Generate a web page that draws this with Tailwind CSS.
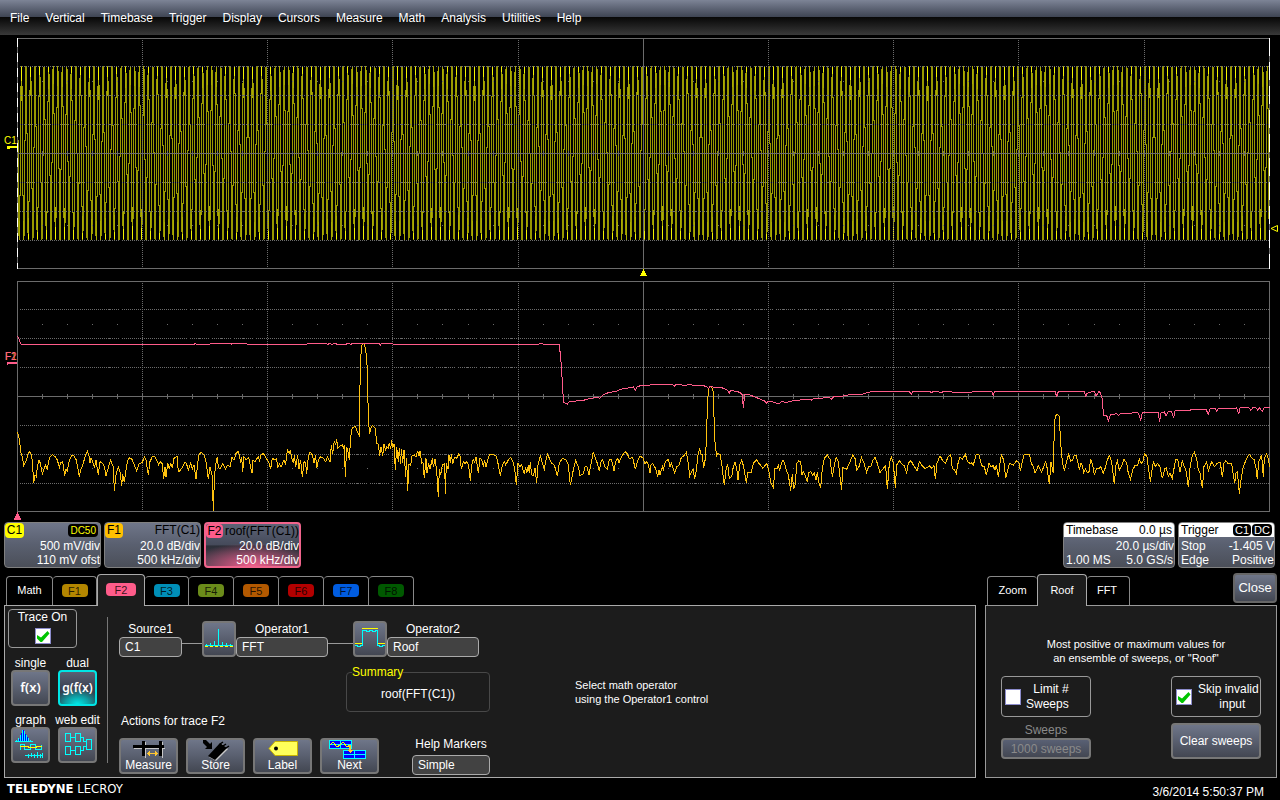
<!DOCTYPE html>
<html lang="en">
  <head>
    <meta charset="utf-8" />
    <meta content="width=device-width, initial-scale=1" name="viewport" />
    <title>Oscilloscope</title>
    <script src="https://cdn.jsdelivr.net/npm/@tailwindcss/browser@4"></script>
  </head>
  <body class="bg-black text-white min-h-screen flex flex-col text-xs font-['Liberation_Sans',Arial,sans-serif]">

    <!-- Menu bar -->
    <header class="h-[35px] bg-linear-to-b from-[#7d8496] from-0% via-[#3f4554] via-48% to-[#383838] relative">
      <div class="absolute inset-x-0 bottom-0 h-[18px] bg-linear-to-b from-[#080808] to-[#3a3a3a]"></div>
      <nav class="relative flex items-center gap-4 h-full px-[10px]">
        <button type="button">File</button>
        <button type="button">Vertical</button>
        <button type="button">Timebase</button>
        <button type="button">Trigger</button>
        <button type="button">Display</button>
        <button type="button">Cursors</button>
        <button type="button">Measure</button>
        <button type="button">Math</button>
        <button type="button">Analysis</button>
        <button type="button">Utilities</button>
        <button type="button">Help</button>
      </nav>
    </header>

    <!-- Time domain grid -->
    <section class="relative" aria-label="C1 waveform">
      <svg class="block w-full h-[241px]" viewBox="0 35 1280 241" preserveAspectRatio="none" shape-rendering="crispEdges" fill="none">
        <g id="sine"></g>
        <g id="gridTop" stroke="#6b6b6b"></g>
        <path d="M17.5 38V269" stroke="#fff" stroke-dasharray="9 6" />
        <path d="M1269.5 38V269" stroke="#fff" stroke-dasharray="18 6" />
        <path d="M7 146h10v2H10v1H7z" fill="#ff0" />
        <path d="M643 269h1v2h1v2h1v2h1v2h-7v-2h1v-2h1v-2h1z" fill="#ff0" />
        <path d="M1271 228.500l6.500-3v6z" stroke="#ff0" shape-rendering="auto" />
      </svg>
      <span class="absolute left-1 top-[100px] text-[10px] leading-3 text-[#ff0]">C1</span>
    </section>

    <!-- Spectrum grid -->
    <section class="relative" aria-label="F1 and F2 spectrum">
      <svg class="block w-full h-[245px]" viewBox="0 276 1280 245" preserveAspectRatio="none" shape-rendering="crispEdges" fill="none">
        <g id="gridBottom" stroke="#6b6b6b"></g>
        <g id="fft" stroke="#ffc20e"></g>
        <g id="roof" stroke="#ff5c8a"></g>
        <path d="M7 362h10v2H8v1H7z" fill="#ff5c8a" />
        <path d="M17 512h1v2h1v2h1v2h1v2h-7v-2h1v-2h1v-2h1z" fill="#ff5c8a" />
      </svg>
      <span class="absolute left-[5px] top-[75px] text-[10px] leading-3 text-[#ffb020]">F1</span>
      <span class="absolute left-[5px] top-[75px] text-[10px] leading-3 text-[#ff5c8a]">F2</span>
    </section>

    <!-- Descriptor boxes -->
    <section class="flex gap-[3px] px-1 pt-[1px] pr-[5px]">
      <div class="w-[97px] h-[46px] border border-[#808080] rounded bg-linear-to-b from-[#6f7689] from-0% via-[#5a6070] via-48% to-[#4b4f59] overflow-hidden text-right">
        <div class="flex justify-between h-[15px] leading-[15px]">
          <span class="bg-[#ff0] text-black rounded-sm w-[19px] text-center">C1</span>
          <span class="bg-black text-[#ff0] rounded-sm text-[10px] px-[2px] my-[1px] leading-[13px] mr-[2px]">DC50</span>
        </div>
        <div class="h-[15px] leading-[17px]">500 mV/div</div>
        <div class="h-[14px] leading-[15px]">110 mV ofst</div>
      </div>
      <div class="w-[97px] h-[46px] border border-[#808080] rounded bg-linear-to-b from-[#6f7689] from-0% via-[#5a6070] via-48% to-[#4b4f59] overflow-hidden text-right">
        <div class="flex justify-between h-[15px] leading-[15px] text-black">
          <span class="bg-[#ffc000] rounded-sm w-[18px] text-center">F1</span>
          <span>FFT(C1)</span>
        </div>
        <div class="h-[15px] leading-[17px]">20.0 dB/div</div>
        <div class="h-[14px] leading-[15px]">500 kHz/div</div>
      </div>
      <div class="w-[97px] h-[46px] border-2 border-[#f0648c] rounded bg-[radial-gradient(70%_55%_at_50%_100%,#f0608c_0%,#a04c6c_45%,transparent_100%),linear-gradient(#5c6376,#454a5a_50%,#2c2f38_52%,#3c3f49)] overflow-hidden text-right">
        <div class="flex justify-between h-[14px] leading-[15px] text-black">
          <span class="bg-[#ff5c8a] rounded-sm w-[17px] text-center">F2</span>
          <span>roof(FFT(C1))</span>
        </div>
        <div class="h-[15px] leading-[17px]">20.0 dB/div</div>
        <div class="h-[14px] leading-[15px]">500 kHz/div</div>
      </div>
      <div class="flex-1"></div>
      <div class="w-[112px] h-[46px] border border-[#808080] rounded bg-linear-to-b from-[#6f7689] from-0% via-[#5a6070] via-48% to-[#4b4f59] overflow-hidden">
        <div class="flex justify-between h-[14px] leading-[15px] bg-white text-black px-[2px]">
          <span>Timebase</span><span>0.0 µs</span>
        </div>
        <div class="h-[16px] leading-[19px] text-right">20.0 µs/div</div>
        <div class="flex justify-between h-[14px] leading-[15px] pl-[2px] pr-[1px]"><span>1.00 MS</span><span>5.0 GS/s</span></div>
      </div>
      <div class="w-[97px] h-[46px] border border-[#808080] rounded bg-linear-to-b from-[#6f7689] from-0% via-[#5a6070] via-48% to-[#4b4f59] overflow-hidden">
        <div class="flex gap-[1px] h-[14px] leading-[15px] bg-white text-black px-[2px]">
          <span class="flex-1">Trigger</span>
          <span class="bg-black text-white rounded-sm text-[11px] leading-3 my-[1px] px-[2px]">C1</span>
          <span class="bg-black text-white rounded-sm text-[11px] leading-3 my-[1px] px-[2px]">DC</span>
        </div>
        <div class="flex justify-between h-[16px] leading-[19px] pl-[2px]"><span>Stop</span><span>-1.405 V</span></div>
        <div class="flex justify-between h-[14px] leading-[15px] pl-[2px]"><span>Edge</span><span>Positive</span></div>
      </div>
    </section>

    <main class="flex gap-[9px] px-1 pt-[5px] pr-[3px]">
      <!-- Math dialog -->
      <div class="flex-1">
        <div class="flex items-end h-8 pl-[2px] text-[11px]" role="tablist">
          <button type="button" role="tab" class="w-[47px] h-[29px] border border-b-0 border-[#888] rounded-t pb-[2px]">Math</button>
          <button type="button" role="tab" class="w-11 h-[29px] border border-b-0 border-l-0 border-[#888] rounded-t pb-[2px] flex items-center justify-center"><span class="bg-[#b38600] text-black/80 rounded-sm w-[26px] h-[13px] leading-[14px]">F1</span></button>
          <button type="button" role="tab" aria-selected="true" class="relative w-12 h-8 -mb-px border border-b-0 border-[#aaa] bg-[#1c1c1c] rounded-t pb-[2px] flex items-center justify-center"><span class="bg-[#ff5c8a] text-black/80 rounded-sm w-[30px] h-[13px] leading-[14px]">F2</span></button>
          <button type="button" role="tab" class="w-11 h-[29px] border border-b-0 border-l-0 border-[#888] rounded-t pb-[2px] flex items-center justify-center"><span class="bg-[#008fb8] text-black/80 rounded-sm w-[26px] h-[13px] leading-[14px]">F3</span></button>
          <button type="button" role="tab" class="w-[45px] h-[29px] border border-b-0 border-l-0 border-[#888] rounded-t pb-[2px] flex items-center justify-center"><span class="bg-[#6b8c1a] text-black/80 rounded-sm w-[26px] h-[13px] leading-[14px]">F4</span></button>
          <button type="button" role="tab" class="w-[45px] h-[29px] border border-b-0 border-l-0 border-[#888] rounded-t pb-[2px] flex items-center justify-center"><span class="bg-[#b35900] text-black/80 rounded-sm w-[26px] h-[13px] leading-[14px]">F5</span></button>
          <button type="button" role="tab" class="w-[45px] h-[29px] border border-b-0 border-l-0 border-[#888] rounded-t pb-[2px] flex items-center justify-center"><span class="bg-[#b30000] text-black/80 rounded-sm w-[26px] h-[13px] leading-[14px]">F6</span></button>
          <button type="button" role="tab" class="w-[45px] h-[29px] border border-b-0 border-l-0 border-[#888] rounded-t pb-[2px] flex items-center justify-center"><span class="bg-[#005ce0] text-black/80 rounded-sm w-[26px] h-[13px] leading-[14px]">F7</span></button>
          <button type="button" role="tab" class="w-[45px] h-[29px] border border-b-0 border-l-0 border-[#888] rounded-t pb-[2px] flex items-center justify-center"><span class="bg-[#005900] text-black/80 rounded-sm w-[26px] h-[13px] leading-[14px]">F8</span></button>
        </div>

        <div class="flex h-[173px] border border-[#aaa] bg-[#1c1c1c] pl-[3px]">
          <!-- Trace and mode -->
          <div class="w-[99px] pt-[3px]">
            <label class="w-[69px] h-[39px] border border-[#999] rounded flex flex-col items-center">
              <span class="leading-[14px] mb-1">Trace On</span>
              <span class="relative w-4 h-4">
                <input type="checkbox" checked class="peer appearance-none block w-4 h-4 bg-white border border-[#8c8ccc]" />
                <svg class="absolute inset-0 w-4 h-4 hidden peer-checked:block pointer-events-none" viewBox="0 0 16 16" fill="#00c400"><path d="M2 7l4 2.500 6.500-6.500 2 2.500-7.500 8.500h-1.500L2 10.500z" /></svg>
              </span>
            </label>
            <div class="grid grid-cols-[39px_39px] gap-x-2 pl-[3px] mt-2 text-center">
              <span class="leading-[14px]">single</span>
              <span class="leading-[14px]">dual</span>
              <button type="button" class="h-9 mb-[7px] rounded border-2 border-[#777] bg-linear-to-b from-[#6f7689] from-0% via-[#5a6070] via-48% to-[#434752] text-[13px] font-['Noto_Sans'] font-semibold">f(x)</button>
              <button type="button" class="h-9 mb-[7px] rounded border-2 border-[#00e5e5] bg-[radial-gradient(70%_50%_at_50%_100%,#00e8e8_0%,#109aa0_50%,transparent_100%),linear-gradient(#596074,#3c4252_50%,#2c3240)] text-xs font-['Noto_Sans'] font-semibold whitespace-nowrap flex items-center justify-center">g(f(x)</button>
              <span class="leading-[14px]">graph</span>
              <span class="leading-[14px] whitespace-nowrap -mx-1">web edit</span>
              <button type="button" aria-label="Graph" class="h-9 rounded border-2 border-[#777] bg-linear-to-b from-[#6f7689] from-0% via-[#5a6070] via-48% to-[#434752] flex items-center justify-center">
                <svg class="w-[34px] h-8" viewBox="0 0 34 32" fill="none" shape-rendering="crispEdges">
                  <path d="M5.500 12V10M7.500 12V4M9.500 12V1M11.500 12V5M13.500 12V8" stroke="#00f" />
                  <path d="M2.500 12V11M4.500 12V9M6.500 12V6M8.500 12V1M10.500 12V2M12.500 12V6M14.500 12V9M16.500 12V11M1 12.500h18" stroke="#0ff" />
                  <path d="M6.500 21V15.500h4V20.500h6V15.500h5V20.500h6V15.500" stroke="#0ff" />
                  <path d="M6 17.500h8v1h8v-1h6" stroke="#ff0" />
                  <path d="M11 26.500h18M14.500 25v4M17.500 24v4M20.500 25v4M23.500 23v6M26.500 25v4M28.500 24v5" stroke="#0ff" />
                </svg>
              </button>
              <button type="button" aria-label="Web edit" class="h-9 rounded border-2 border-[#777] bg-linear-to-b from-[#6f7689] from-0% via-[#5a6070] via-48% to-[#434752] flex items-center justify-center">
                <svg class="w-[34px] h-8" viewBox="0 0 34 32" fill="none" stroke="#0ff" shape-rendering="crispEdges">
                  <path d="M4.500 4.500h5v8h-5zM14.500 4.500h5v8h-5zM4.500 17.500h5v8h-5zM14.500 17.500h5v8h-5zM25.500 10.500h5v10h-5zM10 8.500h4M10 21.500h4M20 8.500h2.500v4H25M20 21.500h2.500v-4H25" />
                </svg>
              </button>
            </div>
          </div>
          <div class="w-px bg-[#777] mt-[11px] mb-[14px]"></div>

          <!-- Operators and actions -->
          <div class="flex-1 pl-[11px] pt-[15px]">
            <div class="flex items-end">
              <div class="w-[63px] flex flex-col">
                <label for="source1" class="text-center leading-[14px] mb-[1px]">Source1</label>
                <select id="source1" class="appearance-none w-full h-5 bg-[#424242] border border-[#aaa] rounded pl-[5px]"><option>C1</option></select>
              </div>
              <div class="w-5 h-px bg-[#999] mb-[13px]"></div>
              <button type="button" aria-label="Operator 1 picture" class="w-[34px] h-9 rounded border-2 border-[#777] bg-linear-to-b from-[#6f7689] from-0% via-[#5a6070] via-48% to-[#434752]">
                <svg class="w-[30px] h-8" viewBox="0 0 30 32" fill="none" shape-rendering="crispEdges">
                  <path d="M1 23.500h28" stroke="#ff0" stroke-dasharray="3 2" />
                  <path d="M1 22.500h28M14.500 6v17M2.500 21v2M6.500 20v3M10.500 18v5M18.500 19v4M22.500 20v3M26.500 21v2" stroke="#0ff" />
                </svg>
              </button>
              <div class="w-[92px] flex flex-col">
                <label for="operator1" class="text-center leading-[14px] mb-[1px]">Operator1</label>
                <select id="operator1" class="appearance-none w-full h-5 bg-[#424242] border border-[#aaa] rounded pl-[5px]"><option>FFT</option></select>
              </div>
              <div class="w-[25px] h-px bg-[#999] mb-[13px]"></div>
              <button type="button" aria-label="Operator 2 picture" class="w-[34px] h-9 rounded border-2 border-[#777] bg-linear-to-b from-[#6f7689] from-0% via-[#5a6070] via-48% to-[#434752]">
                <svg class="w-[30px] h-8" viewBox="0 0 30 32" fill="none" shape-rendering="crispEdges">
                  <path d="M0 20.500h7M7 5.500h16M23 20.500h7" stroke="#ff0" />
                  <path d="M0 22.500h2v1h3v-1h2.500V6.500M8 7.500h3v1h3v-1h3v1h3v-1h2.500V22.500h2v1h3v-1h3" stroke="#0ff" />
                </svg>
              </button>
              <div class="w-[92px] flex flex-col">
                <label for="operator2" class="text-center leading-[14px] mb-[1px]">Operator2</label>
                <select id="operator2" class="appearance-none w-full h-5 bg-[#424242] border border-[#aaa] rounded pl-[5px]"><option>Roof</option></select>
              </div>
            </div>

            <div class="flex items-end mt-2 ml-[227px] gap-[85px]">
              <fieldset class="w-[144px] h-[47px] border border-[#484848] rounded">
                <legend class="ml-[5px] leading-[14px] text-[#ff0]">Summary</legend>
                <p class="leading-[14px] mt-2 text-center">roof(FFT(C1))</p>
              </fieldset>
              <p class="text-[11px] leading-[14px] mb-[6px]">Select math operator<br />using the Operator1 control</p>
            </div>

            <div class="flex items-end mt-[2px]">
              <div>
                <p class="leading-[14px] pl-[2px] mb-[10px]">Actions for trace F2</p>
                <div class="flex gap-2">
                  <button type="button" class="w-[59px] h-9 rounded border-2 border-[#777] bg-linear-to-b from-[#6f7689] from-0% via-[#5a6070] via-48% to-[#434752] flex flex-col items-center">
                    <svg class="w-8 h-[18px] shrink-0" viewBox="0 0 32 18" fill="none" shape-rendering="crispEdges">
                      <path d="M1 8.500h31M12.500 2v16M29.500 2v16" stroke="#c8c8c8" />
                      <path d="M0 6.500h31M10.500 1v15M27.500 1v15" stroke="#000" stroke-width="3" />
                      <path d="M14 13.500h11M16.500 11v5M15.500 12v3M22.500 11v5M23.500 12v3" stroke="#ffc832" />
                    </svg>
                    <span class="leading-[14px]">Measure</span>
                  </button>
                  <button type="button" class="w-[59px] h-9 rounded border-2 border-[#777] bg-linear-to-b from-[#6f7689] from-0% via-[#5a6070] via-48% to-[#434752] flex flex-col items-center">
                    <svg class="w-8 h-[18px] shrink-0 overflow-visible" viewBox="0 0 32 18" fill="none">
                      <path d="M9 17L22 4l6 5-12 12z" fill="#c8c8c8" />
                      <path d="M8 16L20 3l7 5-12 12z" fill="#000" />
                      <path d="M20 4l3-2M23 6l3-2M26 8l3-2" stroke="#000" stroke-width="1.500" />
                      <path d="M3 0h3l4 4 2-2v7H5l2-2-4-4z" fill="#000" />
                    </svg>
                    <span class="leading-[14px] relative">Store</span>
                  </button>
                  <button type="button" class="w-[59px] h-9 rounded border-2 border-[#777] bg-linear-to-b from-[#6f7689] from-0% via-[#5a6070] via-48% to-[#434752] flex flex-col items-center">
                    <svg class="w-8 h-[18px] shrink-0" viewBox="0 0 32 18">
                      <path d="M2 8.500L8 1.500H30.500V15.500H8z" fill="#ffff5a" stroke="#c8b400" />
                      <circle cx="9" cy="8.500" r="2" fill="#000" />
                    </svg>
                    <span class="leading-[14px]">Label</span>
                  </button>
                  <button type="button" class="w-[59px] h-9 rounded border-2 border-[#777] bg-linear-to-b from-[#6f7689] from-0% via-[#5a6070] via-48% to-[#434752] flex flex-col items-center">
                    <svg class="w-[42px] h-[18px] shrink-0 overflow-visible" viewBox="0 0 42 18" shape-rendering="crispEdges">
                      <path d="M.5.500h22v8H.5zM14.500 10.500h22v8h-22z" fill="#00f" stroke="#0ff" />
                      <path d="M0 4.500h22M11.500 0v8M15 14.500h21M25.500 10v8" stroke="#0ff" fill="none" />
                      <path d="M1 5l3-3 4 5 3-2 3-3 4 5 3-2" stroke="#ff0" fill="none" />
                      <path d="M20 5h2v5h2l-3 3-3-3h2z" fill="#ffc832" />
                    </svg>
                    <span class="leading-[14px]">Next</span>
                  </button>
                </div>
              </div>
              <div class="w-[78px] ml-[33px] -mb-px flex flex-col">
                <label for="helpMarkers" class="text-center leading-[14px] mb-1 whitespace-nowrap">Help Markers</label>
                <select id="helpMarkers" class="appearance-none w-full h-5 bg-[#424242] border border-[#aaa] rounded pl-[5px]"><option>Simple</option></select>
              </div>
            </div>
          </div>
        </div>
      </div>

      <!-- Roof dialog -->
      <div class="w-[292px]">
        <div class="flex items-end h-8 pl-[2px] text-[11px]" role="tablist">
          <button type="button" role="tab" class="w-[50px] h-[29px] border border-b-0 border-r-0 border-[#888] rounded-t pb-[2px]">Zoom</button>
          <button type="button" role="tab" aria-selected="true" class="relative w-[50px] h-8 -mb-px border border-b-0 border-[#aaa] bg-[#1c1c1c] rounded-t">Roof</button>
          <button type="button" role="tab" class="w-[43px] h-[29px] border border-b-0 border-l-0 border-[#888] rounded-t pb-[2px] pr-[2px]">FFT</button>
          <button type="button" class="ml-auto mb-[2px] w-11 h-[30px] rounded border-2 border-[#666] bg-linear-to-b from-[#6f7689] from-0% via-[#5a6070] via-48% to-[#434752] text-[13px]">Close</button>
        </div>
        <div class="h-[173px] border border-[#999] bg-[#1c1c1c] pl-[15px] pr-[15px] pt-[31px]">
          <p class="text-[11px] leading-[14px] text-center pl-[10px]">Most positive or maximum values for<br />an ensemble of sweeps, or "Roof"</p>
          <div class="flex justify-between mt-[11px]">
            <label class="w-[90px] h-[41px] border border-[#999] rounded flex items-center gap-[5px] pl-[3px]">
              <input type="checkbox" class="appearance-none shrink-0 w-4 h-4 bg-white border border-[#8c8ccc]" />
              <span class="leading-[15px] text-right">Limit #<br />Sweeps</span>
            </label>
            <label class="w-[90px] h-[41px] border border-[#999] rounded flex items-center gap-[5px] pl-1">
              <span class="relative w-4 h-4 shrink-0">
                <input type="checkbox" checked class="peer appearance-none block w-4 h-4 bg-white border border-[#8c8ccc]" />
                <svg class="absolute inset-0 w-4 h-4 hidden peer-checked:block pointer-events-none" viewBox="0 0 16 16" fill="#00c400"><path d="M2 7l4 2.500 6.500-6.500 2 2.500-7.500 8.500h-1.500L2 10.500z" /></svg>
              </span>
              <span class="leading-[15px] whitespace-nowrap text-center pl-[1px]">Skip invalid<br /><span class="pl-2">input</span></span>
            </label>
          </div>
          <div class="flex justify-between mt-[6px]">
            <div class="w-[90px] text-center text-[#8a8a8a]">
              <label for="sweeps" class="block leading-[15px]">Sweeps</label>
              <button id="sweeps" type="button" disabled class="w-full h-[21px] rounded border-2 border-[#777] bg-linear-to-b from-[#596074] to-[#434752] leading-[14px]">1000 sweeps</button>
            </div>
            <button type="button" class="w-[90px] h-9 rounded border-2 border-[#777] bg-linear-to-b from-[#6f7689] from-0% via-[#5a6070] via-48% to-[#434752] whitespace-nowrap">Clear sweeps</button>
          </div>
        </div>
      </div>
    </main>

    <!-- Footer -->
    <footer class="flex-1 flex items-center justify-between pl-[7px] pr-4">
      <p class="text-[13px] leading-5 font-['DejaVu_Sans_Condensed','Noto_Sans',sans-serif]"><b>TELEDYNE</b> LECROY</p>
      <time class="pt-[5px]">3/6/2014 5:50:37 PM</time>
    </footer>

    <script>
      const SVG = "http://www.w3.org/2000/svg";

      function addPath(id, d, attrs = {}) {
        const path = document.createElementNS(SVG, "path");
        path.setAttribute("d", d);
        for (const key in attrs) path.setAttribute(key, attrs[key]);
        document.getElementById(id).appendChild(path);
      }

      // 10 x 8 division graticule, top is the y of the frame
      function drawGrid(id, top) {
        const left = 17.5, right = 1269.5, bottom = top + 230;
        const mid = top + 115;
        let solid = `M${left} ${top}H${right}V${bottom}H${left}ZM${left} ${mid}H${right}M643.5 ${top}V${bottom}`;
        let dotsX = "", dotsY = "", ticks = "";
        for (let i = 1; i < 10; i++) {
          if (i !== 5) dotsY += `M${Math.floor(17.3 + i * 125.2) + 0.5} ${top + 1.5}V${bottom}`;
        }
        for (let i = -3; i < 4; i++) {
          if (i !== 0) dotsX += `M${left + 2} ${mid + i * 29}H${right}`;
        }
        for (let i = 1; i < 50; i++) {
          const x = Math.floor(17.3 + i * 25.04) + 0.5;
          ticks += `M${x} ${mid - 2.5}v5`;
          if (i % 5) ticks += `M${x} ${mid - 72.5}v1M${x} ${mid + 71.5}v1`;
        }
        addPath(id, solid);
        addPath(id, dotsX + dotsY, { "stroke-dasharray": "1 1" });
        addPath(id, ticks);
      }

      // one min/max bar for each pixel column
      function drawSine() {
        const period = 4.53, mid = 153, amp = 87;
        const y = (x) => mid - amp * Math.cos((2 * Math.PI * (x - 21.5)) / period);
        let base = "", warm = "", hot = "";
        for (let x = 18; x < 1269; x++) {
          let ys = [];
          for (let k = 0; k <= 16; k++) ys.push(y(x + k / 16));
          const lo = Math.min(...ys), hi = Math.max(...ys);
          base += `M${x + 0.5} ${Math.floor(lo)}V${Math.ceil(hi)}`;
          const a = Math.min(ys[0], ys[16]), b = Math.max(ys[0], ys[16]);
          if (a - lo > 3) {
            warm += `M${x + 0.5} ${Math.floor(lo)}V${Math.ceil(a + 14)}`;
            if (a - lo > 7) hot += `M${x + 0.5} ${Math.floor(lo + 1)}V${Math.ceil(lo + (a - lo) * 0.7)}`;
          }
          if (hi - b > 3) {
            warm += `M${x + 0.5} ${Math.floor(b - 14)}V${Math.ceil(hi)}`;
            if (hi - b > 7) hot += `M${x + 0.5} ${Math.floor(hi - (hi - b) * 0.7)}V${Math.ceil(hi - 1)}`;
          }
        }
        addPath("sine", base, { stroke: "#989800" });
        addPath("sine", warm, { stroke: "#acac00" });
        addPath("sine", hot, { stroke: "#f4f400" });
      }

      // trace pieces: x and y origin, then points at a third of a pixel
      const fft = [
        [0, 280, "52,457 56,465 60,495 63,520 67,530 71,556 76,548 80,540 83,525 88,514 95,525 98,560 101,609 105,585 109,590 112,562 117,540 121,550 127,582 134,562 137,555 142,570 145,548 150,530 157,524 166,530 172,540 178,562 182,548 188,545 194,588 198,568 202,572 207,545 215,527 221,527 229,540 238,590 242,570 248,557 255,530 262,514 267,528 270,550 273,535 278,545 284,562 288,540 295,585 300,545 308,550 314,562 318,588 323,570 328,550 332,540 337,555 340,560 343,633 347,590 350,575 355,560 360,575 365,618 368,582 373,607 377,575 382,545 387,533 396,538 403,555 410,573 418,550 427,548 433,530 438,540 445,585 450,545 457,530 464,530 470,540 476,555 480,545 487,552 491,598 495,560 498,590 503,550 508,567 512,548 517,565 522,535 531,528 535,575 540,572 548,560 555,545 560,553 565,570 572,550 577,567 582,555 588,598 593,550 597,525 603,517 612,524 618,545 625,598 630,560 636,585 638,630 640,694 643,600 646,560 652,530 655,562 660,567 668,550 677,567 682,555 690,560 696,532 702,540 708,520 715,514 719,530 722,548 725,532 728,575 732,530 738,540 746,532 756,580 759,540 765,545 775,530 779,543 783,525 790,520 797,532 802,540 808,550 812,568 817,535 825,540 830,535 833,565 838,552 843,562 852,540 857,552 862,510 868,520 871,510 875,535 880,550 883,525 887,560 893,525 897,567 902,540 907,592 912,545 917,550 920,582 925,530 930,516 937,525 942,550 947,525 950,565 955,540 962,530 970,535 977,545 982,530 990,545"],
        [320, 320, "30,427 34,375 38,402 43,363 47,375 50,357 53,385 60,378 67,375 70,385 73,375 76,470 80,380 84,395 88,420 92,350 97,323 106,320 112,335 118,346 121,122 126,75 131,70 137,88 142,145 145,300 149,343 152,325 158,316 166,325 170,370 175,372 179,407 183,380 188,408 192,372 197,392 200,380 205,385 208,368 212,388 215,360 218,385 222,372 226,450 230,382 235,425 238,385 242,432 244,388 248,428 252,390 257,470 260,415 263,512 267,432 272,437 276,408 283,405 288,412 293,392 297,408 300,392 305,430 309,428 313,475 318,415 321,458 326,430 330,448 337,415 340,440 345,418 350,450 355,532 358,448 362,465 367,435 374,430 376,523 379,430 384,448 387,405 391,430 394,403 398,432 403,412 410,415 416,402 420,408 424,447 430,425 435,432 440,425 446,437 451,482 455,435 460,418 464,427 468,412 475,458 480,415 485,418 490,440 494,420 498,440 503,420 508,405 518,403 528,407 533,425 541,468 547,435 553,425 557,435 565,420 572,412 579,425 584,445 589,495 594,430 600,440 605,435 613,463 617,440 620,460 625,435 628,460 631,425 635,465 640,467 645,445 650,490 654,435 661,406 667,430 673,447 678,420 683,402 690,420 695,430 703,435 712,468 718,430 727,415 738,420 745,435 751,495 757,465 762,440 767,422 775,440 780,467 790,462 795,440 801,440 807,465 813,432 820,395 826,415 832,430 838,453 843,425 848,418 854,440 862,448 868,418 875,420 882,453 887,425 893,415 897,428 905,410 915,395 922,402 928,415 938,413 946,448 952,425 960,408 970,415 975,432 980,425 985,435 990,458"],
        [640, 320, "30,458 33,435 38,430 43,440 47,445 53,470 57,450 60,465 67,440 70,450 76,425 85,418 90,440 94,430 104,458 110,440 118,435 124,412 131,408 139,397 144,425 149,468 155,455 159,447 164,478 169,450 174,405 179,387 183,402 187,405 191,445 197,410 200,330 203,240 206,205 212,200 218,205 221,230 223,345 227,385 230,412 232,400 240,403 245,430 249,465 253,495 258,450 263,432 268,475 275,470 280,440 285,425 290,445 294,480 299,435 305,420 311,440 319,490 323,458 334,458 340,430 350,420 357,430 369,445 380,430 387,455 393,490 400,503 405,445 411,447 415,437 419,453 424,430 429,420 434,430 440,455 445,465 452,512 457,462 461,507 465,495 471,430 476,422 482,425 486,465 490,455 495,465 502,485 506,458 513,455 518,465 523,458 528,480 532,455 536,485 542,505 547,445 553,415 562,405 570,418 577,470 583,435 589,412 595,425 600,470 605,510 608,442 620,448 630,425 638,405 645,415 650,450 657,440 664,412 672,430 680,457 685,440 692,440 698,422 705,412 712,430 720,458 730,445 737,438 742,508 748,430 754,412 760,428 766,505 770,435 778,422 785,432 793,438 800,458 805,430 813,422 820,435 831,452 838,425 845,435 855,445 862,443 868,437 876,445 882,437 886,478 891,430 900,407 907,420 916,430 924,412 932,403 937,445 943,450 949,460 955,425 960,412 967,418 976,403 983,425 990,430"],
        [950, 320, "60,430 64,428 70,435 79,402 87,405 95,437 103,440 109,465 117,430 123,440 130,437 135,450 139,435 145,472 150,430 154,405 161,420 167,475 173,450 178,430 190,435 200,422 208,430 211,453 217,425 222,405 230,402 239,405 244,430 250,440 255,460 265,437 275,457 281,440 286,425 290,435 298,493 303,425 310,460 313,320 316,288 322,283 328,290 331,355 335,405 338,430 343,452 350,425 356,402 362,423 368,420 372,407 378,405 383,425 388,447 393,430 398,440 401,457 406,447 412,458 417,455 422,418 428,435 433,465 440,445 447,447 452,440 460,460 467,440 472,420 478,407 485,425 493,493 498,435 502,422 508,450 515,438 522,418 530,430 535,460 541,478 548,450 556,435 563,435 568,418 573,430 578,427 583,402 591,410 596,450 601,485 606,450 610,425 616,440 622,430 630,440 637,475 645,445 649,443 655,470 660,460 667,475 673,440 677,418 683,418 690,457 697,422 703,440 709,455 715,502 721,435 727,405 733,397 740,415 744,445 750,460 757,505 762,440 770,425 775,452 785,425 793,440 802,430 811,427 817,472 822,430 828,422 833,430 845,430 850,465 854,490 858,460 862,455 868,522 873,480 880,440 890,415 898,403 906,415 912,418 918,445 922,478 926,425 935,405 940,470 943,415 950,402 955,418 959,440"],
      ];
      const roof = [
        [0, 280, "52,167 58,180 63,193 582,193 586,190 590,193 630,193 631,190 692,190 694,193 697,190 738,190 742,193 920,193 926,190 978,190 984,193 987,190 990,190"],
        [320, 320, "30,70 35,73 45,70 52,73 78,73 82,70 93,73 98,70 178,70 181,76 184,70 215,70 222,73 655,73 660,70 672,73 718,73 722,115 725,150 728,210 731,247 742,252 748,244 760,246 775,241 790,241 808,236 830,232 840,235 850,224 868,217 890,214 900,208 920,205 940,201 946,211 952,200 965,196 990,196"],
        [640, 320, "30,194 70,195 98,193 103,199 108,193 135,196 150,193 160,197 190,197 200,200 206,205 210,199 225,202 245,203 262,210 268,219 272,211 300,217 307,225 310,265 314,223 330,225 350,233 372,242 380,249 385,243 405,247 415,252 425,245 440,247 465,241 510,238 514,241 518,237 530,235 570,233 574,238 580,231 600,229 620,227 630,223 665,223 690,216 710,214 808,215 814,223 818,214 870,214 874,219 880,214 905,217 912,214 948,217 960,216 990,217"],
        [950, 320, "60,217 75,214 125,214 130,226 134,214 316,214 320,232 325,214 402,214 407,229 411,220 430,214 434,214 438,229 446,215 451,217 456,235 461,286 470,286 475,303 481,284 500,281 506,286 512,281 530,281 560,277 566,281 572,300 577,278 624,277 629,305 633,278 643,276 648,287 654,275 665,275 671,295 675,272 715,271 735,268 768,268 775,283 780,266 796,265 800,274 806,265 860,264 866,283 870,263 897,263 903,271 908,263 918,263 923,271 928,263 937,274 942,264 959,262"],
      ];

      function drawTrace(id, pieces) {
        for (const [ox, oy, points] of pieces) {
          const d = points.split(" ").map((p) => {
            const [x, y] = p.split(",").map(Number);
            return `${(ox + x / 3).toFixed(2)} ${(oy + y / 3).toFixed(2)}`;
          });
          addPath(id, "M" + d.join("L"));
        }
      }

      drawSine();
      drawGrid("gridTop", 38.5);
      drawGrid("gridBottom", 281.5);
      drawTrace("fft", fft);
      drawTrace("roof", roof);
    </script>
  </body>
</html>
